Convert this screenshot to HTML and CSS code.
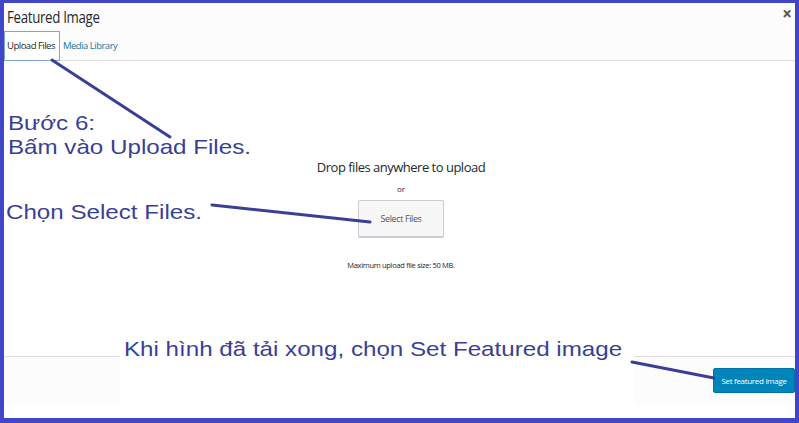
FILE: index.html
```html
<!DOCTYPE html>
<html lang="en">
<head>
    <meta charset="UTF-8">
    <title>Featured Image</title>
    <link rel="stylesheet" href="styles.css">
</head>
<body>
    <div class="modal">
        <div class="modal-header">
            <h1>Featured Image</h1>
            <span class="close">&times;</span>
        </div>
        <div class="tabs">
            <a class="tab active">Upload Files</a>
            <a class="tab">Media Library</a>
        </div>
        <div class="uploader">
            <p class="drop-text">Drop files anywhere to upload</p>
            <p class="or">or</p>
            <button type="button" class="select-btn">Select Files</button>
            <p class="max-size">Maximum upload file size: 50 MB.</p>
        </div>
        <div class="modal-footer">
            <button type="button" class="primary-btn">Set featured image</button>
        </div>
        <div class="footer-gap"></div>

        <div class="note note-step">Bước 6:<br>Bấm vào Upload Files.</div>
        <div class="note note-select">Chọn Select Files.</div>
        <div class="note-box"><span class="note">Khi hình đã tải xong, chọn Set Featured image</span></div>
        <svg class="arrows" width="791" height="415" viewBox="0 0 791 415">
            <line x1="48" y1="57" x2="166" y2="134" />
            <line x1="208" y1="202" x2="366" y2="219" />
            <line x1="628" y1="359" x2="710" y2="375" />
        </svg>
    </div>
</body>
</html>
```

FILE: styles.css
```css
body { margin: 0; background: #4146c9; font-family: "Open Sans", Arial, sans-serif; }
.modal { position: relative; margin: 3px 4px 0 4px; height: 415px; background: #fff; display: flex; flex-direction: column; overflow: hidden; }
.modal-header { height: 27px; background: #fcfcfc; display: flex; align-items: center; justify-content: space-between; padding: 0 3px 0 3px; }
.modal-header h1 { margin: 0; font-size: 17px; font-weight: normal; color: #23282d; letter-spacing: -0.4px; transform: scaleX(0.78); transform-origin: left center; }
.close { font-size: 17px; font-weight: bold; color: #555; line-height: 1; margin-top: -6px; }
.tabs { height: 30px; background: #fcfcfc; border-bottom: 1px solid #ddd; display: flex; align-items: flex-end; }
.tab { font-size: 9.5px; letter-spacing: -0.5px; color: #21759b; padding: 0 4px 0 2px; height: 28px; line-height: 28px; margin-bottom: -1px; border: 1px solid transparent; }
.tab.active { color: #23282d; background: #fff; border-color: #7ea6d3; }
.uploader { flex: 1; display: flex; flex-direction: column; align-items: center; padding-top: 97px; padding-left: 3px; }
.uploader p { margin: 0; color: #23282d; }
.drop-text { font-size: 13px; letter-spacing: -0.5px; line-height: 18px; }
.or { font-size: 8px; line-height: 12px; margin-top: 7px !important; }
.select-btn { margin-top: 5px; width: 86px; height: 37px; background: #f7f7f7; border: 1px solid #ccc; border-radius: 2px; box-shadow: 0 1px 0 #ccc; font-family: "Open Sans", Arial, sans-serif; font-size: 9px; letter-spacing: -0.4px; color: #555; padding: 0; }
.max-size { font-size: 7.5px; letter-spacing: -0.3px; margin-top: 23px !important; }
.modal-footer { height: 49px; background: #fcfcfc; border-top: 1px solid #ddd; display: flex; align-items: center; justify-content: flex-end; box-sizing: border-box; }
.primary-btn { width: 82px; height: 25px; margin-top: -2px; background: #0085ba; border: 1px solid #0073aa; border-radius: 2px; color: #fff; font-family: "Open Sans", Arial, sans-serif; font-size: 8px; letter-spacing: -0.3px; padding: 0; }
.footer-gap { height: 13px; background: #fff; }
.note { position: absolute; font-family: "Liberation Sans", Arial, sans-serif; font-size: 21px; line-height: 24px; color: #3a3f96; white-space: nowrap; transform: scaleX(1.15); transform-origin: left top; }
.note-step { left: 4px; top: 108px; }
.note-select { left: 2px; top: 197px; }
.note-box { position: absolute; left: 116px; top: 327px; width: 514px; height: 74px; background: #fff; }
.note-box .note { left: 4px; top: 7px; }
.arrows { position: absolute; left: 0; top: 0; }
.arrows line { stroke: #3a3f96; stroke-width: 3; stroke-linecap: round; }
```
